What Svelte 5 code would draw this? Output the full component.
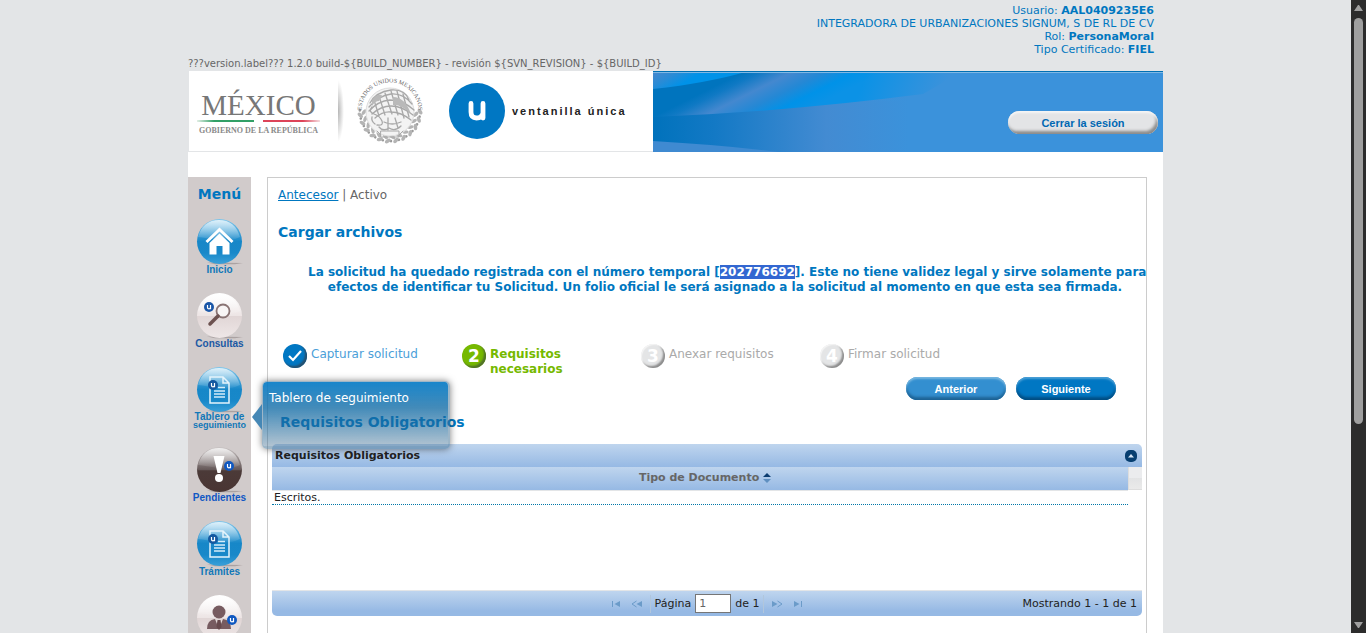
<script>
  const menu = [
    { icon: 'home', label: 'Inicio', tone: 'sky' },
    { icon: 'search', label: 'Consultas', tone: 'navy' },
    { icon: 'doc', label: 'Tablero de', second: 'seguimiento', tone: 'sky', tip: 'Tablero de seguimiento' },
    { icon: 'alert', label: 'Pendientes', tone: 'royal' },
    { icon: 'doc', label: 'Trámites', tone: 'sky' },
    { icon: 'person', label: '', tone: 'navy' }
  ];
  const steps = [
    { n: '', label: 'Capturar solicitud', state: 'done' },
    { n: '2', label: 'Requisitos necesarios', state: 'current' },
    { n: '3', label: 'Anexar requisitos', state: 'todo' },
    { n: '4', label: 'Firmar solicitud', state: 'todo' }
  ];
  const discs = { home: 'url(#blueDisc)', doc: 'url(#blueDisc)', search: 'url(#paleDisc)', person: 'url(#paleDisc)', alert: 'url(#darkDisc)' };
  const leaves = Array.from({ length: 12 }, (_, i) => 5 + i * 15.5);
  let page = $state('1');
</script>

{#snippet badge(x, y, r, color)}
  <circle cx={x} cy={y} {r} fill={color} />
  <path d="M{x - 1.5} {y - 2}v2.500q0 1.300 1.500 1.300t1.500-1.300v-2.500M{x + 1.5} {y}v2.200" fill="none" stroke="#fff" stroke-width="1.200" />
{/snippet}

<div class="shell">
  <div class="view">
    <div class="site">
      <div class="user">
        <div>Usuario: <b>AAL0409235E6</b></div>
        <div>INTEGRADORA DE URBANIZACIONES SIGNUM, S DE RL DE CV</div>
        <div>Rol: <b>PersonaMoral</b></div>
        <div>Tipo Certificado: <b>FIEL</b></div>
      </div>
      <div class="version">???version.label??? 1.2.0 build-{'${BUILD_NUMBER}'} - revisión {'${SVN_REVISION}'} - {'${BUILD_ID}'}</div>

      <header>
        <div class="logos">
          <div class="mexico">
            <span class="name">MÉXICO</span>
            <span class="flag"><i></i><i></i></span>
            <span class="gov">GOBIERNO DE LA REPÚBLICA</span>
          </div>
          <div class="divider"></div>
          <svg class="seal" width="70" height="70" viewBox="0 0 70 70" aria-hidden="true">
            <defs><path id="sealArc" d="M13 53A28.500 28.500 0 1 1 57 53" /></defs>
            <g fill="#b4b4b4">
              {#each leaves as a}
                <g transform="rotate({a} 35 35)">
                  <ellipse cx="65" cy="33" rx="3.200" ry="1.800" transform="rotate(50 65 33)" />
                  <ellipse cx="61" cy="36" rx="3.200" ry="1.700" transform="rotate(-50 61 36)" />
                  <circle cx="65" cy="38" r="1.300" fill="#999" />
                </g>
              {/each}
            </g>
            <circle cx="35" cy="36" r="24" fill="#f3f3f3" stroke="#ddd" />
            <text class="sealtext"><textPath href="#sealArc" startOffset="50%" text-anchor="middle">ESTADOS UNIDOS MEXICANOS</textPath></text>
            <g fill="none" stroke="#a8a8a8" stroke-width="1.300" stroke-linecap="round">
              <path d="M15 27q6-11 21-13 14-1 18 10M14 31q9-11 22-13 12-1 21 10M14 35q9-10 21-11 13 0 24 10M17 38q9-8 19-8 11 0 22 9M20 42q8-7 16-6 10 0 20 8" />
              <path d="M19 24l5 16M24 20l6 19M30 17l7 21M36 15l7 24M42 15l7 27M48 18l6 23" />
              <path d="M17 31q-4 5 2 7t8 7q2 5-5 4M29 46q8 4 17 0M24 51q4 5 10 1 6 4 12-2M33 42v12M40 42l3 10M20 48q-4-3-3-7" />
              <path d="M26 55h18v6H26zM22 55l4 4M48 55l-4 4" stroke-width="1" />
            </g>
            <path d="M17 24q4-6 10-5l-3 6q-4 0-7 5zM38 21q12 0 18 17-10-10-18-9z" fill="#b9b9b9" />
          </svg>
          <svg class="unica" width="56" height="56" viewBox="0 0 56 56" aria-hidden="true">
            <circle cx="28" cy="28" r="28" fill="#0077c3" />
            <path d="M22 20.500v8.500q0 6 5.500 6t6.500-5v-9.500V35" fill="none" stroke="#fff" stroke-width="4.800" stroke-linecap="round" stroke-linejoin="round" />
          </svg>
          <span class="ventanilla">ventanilla única</span>
        </div>
        <div class="banner">
          <svg viewBox="0 0 510 81" preserveAspectRatio="none" aria-hidden="true">
            <defs>
              <linearGradient id="b1" x1="0" y1="0" x2="510" y2="0" gradientUnits="userSpaceOnUse"><stop offset="0" stop-color="#0072bc" /><stop offset=".12" stop-color="#1379c5" /><stop offset=".34" stop-color="#438bd2" /><stop offset=".5" stop-color="#3b92db" /><stop offset="1" stop-color="#3b92db" /></linearGradient>
              <linearGradient id="b2" x1="0" y1="46" x2="28" y2="102" gradientUnits="userSpaceOnUse"><stop offset="0" stop-color="#0074be" /><stop offset=".12" stop-color="#0f79c4" /><stop offset=".35" stop-color="#4488cf" /><stop offset=".58" stop-color="#2488d5" /><stop offset=".8" stop-color="#0092e8" /><stop offset="1" stop-color="#0b92e6" /></linearGradient>
              <linearGradient id="b3" x1="0" y1="0" x2="16" y2="28" gradientUnits="userSpaceOnUse"><stop offset="0" stop-color="#4a88cd" /><stop offset=".4" stop-color="#2b8bd5" /><stop offset=".8" stop-color="#0092e8" /></linearGradient>
              <linearGradient id="fade" x1="215" y1="0" x2="285" y2="30" gradientUnits="userSpaceOnUse"><stop offset="0" stop-color="#3b92db" stop-opacity="0" /><stop offset="1" stop-color="#3b92db" /></linearGradient>
            </defs>
            <path fill="url(#b1)" d="M0 0h510v81H0z" />
            <path fill="url(#b2)" d="M0 0h310L270 23Q130 41 0 46z" />
            <path fill="url(#fade)" d="M170 0h145v30H170z" />
            <path fill="url(#b3)" d="M0 0h96Q55 12 0 18z" />
            <path fill="#3f8ad1" d="M0 70q70 4 126 11H0z" />
            <path fill="#80b8e4" d="M0 1h510v1H0z" />
            <path fill="#0070b4" d="M0 0h510v1H0z" />
          </svg>
          <button class="pill logout" type="button">Cerrar la sesión</button>
        </div>
      </header>

      <div class="body">
        <nav>
          <h2>Menú</h2>
          {#each menu as m}
            <a href="#menu" class="item {m.tone}">
              <svg width="54" height="46" viewBox="0 0 54 46" aria-hidden="true">
                <defs>
                  <linearGradient id="blueDisc" x2="0" y2="1"><stop offset="0" stop-color="#7fc7ec" /><stop offset=".5" stop-color="#1787c8" /><stop offset=".75" stop-color="#1888c9" /><stop offset="1" stop-color="#3aa0d8" /></linearGradient>
                  <linearGradient id="paleDisc" x2="0" y2="1"><stop offset="0" stop-color="#fff" /><stop offset=".5" stop-color="#ede5e5" /><stop offset=".52" stop-color="#e1d6d6" /><stop offset="1" stop-color="#eee7e7" /></linearGradient>
                  <linearGradient id="darkDisc" x2="0" y2="1"><stop offset="0" stop-color="#c9c4c4" /><stop offset=".5" stop-color="#665959" /><stop offset=".53" stop-color="#4b3a38" /><stop offset="1" stop-color="#4a3533" /></linearGradient>
                  <linearGradient id="gloss" x2="0" y2="1"><stop offset="0" stop-color="#fff" stop-opacity=".75" /><stop offset="1" stop-color="#fff" stop-opacity=".03" /></linearGradient>
                </defs>
                <path d="M14 43.500l36 .5-8 1.200H22z" fill="#aaa2a2" />
                <circle cx="26.500" cy="22.500" r="22.500" fill={discs[m.icon]} />
                <path d="M5 18Q10 1 26 1t21 17q-10 5-22 3T5 18z" fill="url(#gloss)" />
                {#if m.icon === 'home'}
                  <path d="M26.500 8.500L12.500 22l2 2 12-11.500L38.500 24l2-2z" fill="#fff" /><path d="M26.500 14.500L16.500 24v11.500h7V27h6v8.500h7V24z" fill="#fff" />
                {:else if m.icon === 'search'}
                  <circle cx="30" cy="18" r="6.500" fill="#f8f5f5" stroke="#8a7474" stroke-width="1.800" /><path d="M25 23L17 31" stroke="#6d5250" stroke-width="3.500" stroke-linecap="round" />{@render badge(16, 14, 5, '#1b57a8')}
                {:else if m.icon === 'doc'}
                  <path d="M17 10h13l6 6v20H17zM30 10v6h6" fill="none" stroke="#e4f4fc" stroke-width="1.500" /><path d="M25 20.500h7M21 24h11M21 27h11M21 30h11" stroke="#d5edf9" stroke-width="1.500" />{@render badge(20, 18, 5, '#1559a0')}
                {:else if m.icon === 'alert'}
                  <path d="M20.500 9h11l-4 17h-3z" fill="#fff" /><circle cx="26" cy="31" r="4" fill="#fff" />{@render badge(36, 19, 5, '#1058c0')}
                {:else}
                  <circle cx="26" cy="17" r="6.500" fill="#775b60" /><path d="M14 34q0-9 8-10l4 10 4-10q8 1 8 10z" fill="#775b60" /><path d="M24.500 25h3l1 7-2.500 3-2.500-3z" fill="#67494d" />{@render badge(39, 25, 5, '#1058c0')}
                {/if}
              </svg>
              {#if m.label}<span class="label" class:wide={m.second}>{m.label}</span>{/if}
              {#if m.second}<span class="label second">{m.second}</span>{/if}
              {#if m.tip}<span class="tip">{m.tip}</span>{/if}
            </a>
          {/each}
        </nav>

        <main>
          <div class="crumbs"><a href="#antecesor">Antecesor</a> | Activo</div>
          <h1>Cargar archivos</h1>
          <p class="notice">La solicitud ha quedado registrada con el número temporal [<mark>202776692</mark>]. Este no tiene validez legal y sirve solamente para<br />efectos de identificar tu Solicitud. Un folio oficial le será asignado a la solicitud al momento en que esta sea firmada.</p>

          <ol class="steps">
            {#each steps as s}
              <li class={s.state}>
                <span class="ball">{#if s.n}{s.n}{:else}<svg width="16" height="14" viewBox="0 0 16 14" aria-hidden="true"><path d="M2 7l4 4 8-9" fill="none" stroke="#fff" stroke-width="2.200" /></svg>{/if}</span>
                <span>{s.label}</span>
              </li>
            {/each}
          </ol>
          <div class="actions">
            <button class="pill prev" type="button">Anterior</button>
            <button class="pill next" type="button">Siguiente</button>
          </div>

          <h2 class="section">Requisitos Obligatorios</h2>
          <section class="grid">
            <div class="gridtitle">
              <span>Requisitos Obligatorios</span>
              <button type="button" aria-label="Contraer"><svg width="12" height="12" viewBox="0 0 12 12"><path d="M3 7.500L6 4l3 3.500z" fill="#d5e5f5" /></svg></button>
            </div>
            <div class="gridbody">
              <div class="tablewrap">
                <table>
                  <thead><tr><th>Tipo de Documento <svg width="8" height="10" viewBox="0 0 8 10" aria-hidden="true"><path d="M0 4l4-4 4 4z" fill="#0a3c70" /><path d="M0 6l4 4 4-4z" fill="#5f8fc0" /></svg></th></tr></thead>
                  <tbody><tr><td>Escritos.</td></tr></tbody>
                </table>
                <div class="gutter"></div>
              </div>
            </div>
            <div class="pager">
              <span></span>
              <div class="pages">
                <button type="button" aria-label="Primera"><svg width="10" height="8" viewBox="0 0 10 8"><path d="M1 1h1v6H1zM9 1v6L3.500 4z" /></svg></button>
                <button type="button" aria-label="Previa"><svg width="12" height="8" viewBox="0 0 12 8"><path d="M11 1v6L5.500 4z" /><path d="M5.500 1L1 4l4.500 3" fill="none" stroke="#6b9bc9" /></svg></button>
                <i></i>
                <label for="page">Página</label>
                <input id="page" type="text" bind:value={page} />
                <span class="total">de 1</span>
                <i></i>
                <button type="button" aria-label="Siguiente"><svg width="12" height="8" viewBox="0 0 12 8"><path d="M1 1v6l5.500-3z" /><path d="M6.500 1L11 4 6.500 7" fill="none" stroke="#6b9bc9" /></svg></button>
                <button type="button" aria-label="Última"><svg width="10" height="8" viewBox="0 0 10 8"><path d="M8 1h1v6H8zM1 1v6l5.500-3z" /></svg></button>
              </div>
              <span class="count">Mostrando 1 - 1 de 1</span>
            </div>
          </section>
        </main>
      </div>
    </div>
  </div>
  <div class="scroll" aria-hidden="true">
    <svg width="9" height="8" viewBox="0 0 9 8"><path d="M4 1h1l4 6H0z" fill="#9f9f9f" /></svg>
    <div class="track"><div class="thumb"></div></div>
    <svg width="9" height="8" viewBox="0 0 9 8"><path d="M4 7h1l4-6H0z" fill="#9f9f9f" /></svg>
  </div>
</div>

<style>
  :global(body) { margin: 0; background: #e3e5e7; }
  * { box-sizing: border-box; }
  .shell { display: flex; height: 100vh; overflow: hidden; font: 12px/15px Verdana, "DejaVu Sans", sans-serif; color: #666; }
  .view { flex: 1; min-width: 0; overflow: hidden; }
  .site { max-width: 975px; margin: 0 auto; display: flex; flex-direction: column; }
  a { color: #0077c0; }
  h1, h2 { margin: 0; color: #0077c0; font-weight: bold; }
  button { font-family: inherit; cursor: pointer; }

  .user { padding: 4px 9px 0 0; text-align: right; font-size: 11px; line-height: 13px; color: #0077c0; }
  .version { font-size: 10px; line-height: 15px; white-space: nowrap; }

  header { display: flex; }
  .logos { flex: 464 1 0; display: flex; align-items: center; height: 81px; margin-left: 1px; background: #fff; border-bottom: 1px solid #e3e5e7; }
  .mexico { display: flex; flex-direction: column; align-items: center; width: 125px; margin-left: 7px; padding-top: 4px; font-family: "Liberation Serif", serif; color: #777; white-space: nowrap; }
  .name { font-size: 29px; line-height: 28px; }
  .flag { display: flex; gap: 9px; width: 123px; margin: 1px 0 4px; }
  .flag i { flex: 1; height: 2px; background: linear-gradient(90deg, #e3efe6, #32a067 30%, #32a067); }
  .flag i + i { background: linear-gradient(90deg, #dd4459, #dd4459 70%, #f5dde0); }
  .gov { font-size: 8px; line-height: 10px; font-weight: bold; color: #8a8a8a; }
  .divider { width: 6px; height: 62px; margin-left: 17px; background: radial-gradient(ellipse at left, #b5b5b5, #fff 70%); }
  .seal { margin-left: 11px; }
  .sealtext { font: 6px "Liberation Serif", serif; fill: #666; }
  .unica { margin-left: 24px; }
  .ventanilla { margin-left: 7px; font: bold 11px/14px "Liberation Sans", sans-serif; letter-spacing: 2px; color: #222; white-space: nowrap; }
  .banner { flex: 510 1 0; display: grid; height: 81px; }
  .banner > * { grid-area: 1 / 1; }
  .banner svg { width: 100%; height: 81px; }

  .pill { height: 23px; padding: 0; border: 0; border-radius: 12px; font: bold 11px/24px "Liberation Sans", sans-serif; color: #fff; text-align: center; }
  .logout { position: relative; justify-self: end; align-self: start; width: 150px; margin: 40px 5px 0 0; color: #0068b3; background: #e3e4e6; box-shadow: inset 0 2px 2px #f5f5f5, inset -2px -3px 3px #8b8b8b; }
  .prev { width: 100px; background: #338fd0; box-shadow: inset 0 2px 2px #78b7e0, inset 0 -3px 3px #1d6294; }
  .next { width: 100px; background: #0077c3; box-shadow: inset 0 2px 2px #4ba0d6, inset 0 -3px 3px #004d82; }

  .body { display: flex; align-items: stretch; padding: 25px 16px 0 0; background: #fff; }
  nav { display: flex; flex-direction: column; align-items: stretch; gap: 18px; width: 63px; flex: none; padding: 8px 0 18px; background: #d1cbcb; }
  nav h2 { margin-bottom: -2px; font-size: 14px; line-height: 18px; text-align: center; }
  .item { position: relative; display: flex; flex-direction: column; align-items: center; text-decoration: none; font: bold 10px/10px "Liberation Sans", sans-serif; }
  .item svg { display: block; }
  .sky { color: #1278b8; }
  .navy { color: #1b59a4; }
  .royal { color: #1057c4; }
  .label { white-space: nowrap; }
  .wide { font-size: 10px; line-height: 8px; }
  .second { font-size: 9px; line-height: 8px; }
  .tip { position: absolute; z-index: 2; left: 74px; top: 14px; width: 188px; height: 68px; padding: 9px 6px; border-radius: 5px; border: 1px solid rgba(60, 110, 145, .5); border-width: 1px 2px 3px 1px; background: linear-gradient(rgba(0, 120, 197, .9), rgba(14, 106, 165, .78) 40%, rgba(60, 105, 140, .4)); background-clip: padding-box; box-shadow: 0 0 7px rgba(0, 0, 0, .5); font: 12px/15px Verdana, "DejaVu Sans", sans-serif; color: #fff; white-space: nowrap; }
  .tip::before { content: ""; position: absolute; left: -11px; top: 22px; border: solid transparent; border-width: 13px 10px 13px 0; border-right-color: #4587b5; }

  main { flex: 1; min-width: 0; margin-left: 16px; padding: 10px 4px 40px; border: 1px solid #ccc; }
  .crumbs { padding-left: 6px; }
  h1 { margin-top: 20px; padding-left: 6px; font-size: 14px; line-height: 18px; }
  .notice { margin: 24px 0 0 36px; text-align: center; font-weight: bold; color: #0077c0; white-space: nowrap; }
  mark { background: #3367d1; color: #fff; }
  .steps { display: flex; margin: 52px 0 0; padding: 0 0 0 11px; list-style: none; min-height: 30px; }
  .steps li { display: flex; gap: 4px; width: 179px; padding-right: 40px; color: #aaa; }
  .ball { display: flex; flex: none; align-items: center; justify-content: center; width: 24px; height: 24px; margin-top: -3px; border-radius: 50%; background: #e4e5e6; color: #fff; font-size: 17px; font-weight: bold; box-shadow: inset 1px 1px 1px #f5f5f5, inset -2px -2px 2px #8d8d8d; }
  .steps .done { color: #4ba0d9; }
  .done .ball { background: #0077c3; box-shadow: inset -2px -2px 2px #26506e; }
  .steps .current { color: #76b900; font-weight: bold; }
  .current .ball { background: #76b900; box-shadow: inset -2px -2px 2px #50702a; }
  .actions { display: flex; justify-content: flex-end; gap: 10px; padding-right: 26px; }
  .section { margin-top: 13px; padding-left: 8px; font-size: 14px; line-height: 18px; }

  .grid { margin-top: 13px; font-size: 11px; color: #222; }
  .gridtitle { display: flex; align-items: center; justify-content: space-between; height: 23px; padding: 0 5px 0 3px; border-radius: 5px 5px 0 0; background: linear-gradient(#bfd5ee, #96b9e4); font-weight: bold; }
  .gridtitle button { width: 12px; height: 12px; padding: 0; border: 0; border-radius: 5px; background: #063e70; }
  .gridtitle svg { display: block; }
  .gridbody { height: 123px; }
  .tablewrap { display: flex; }
  table { flex: 1; border-collapse: collapse; }
  th { height: 23px; padding: 0 0 2px 10px; border-bottom: 1px solid #e3e5e7; background: linear-gradient(#bfd5ee, #96b9e4); color: #666; }
  td { height: 14px; padding: 0 2px; line-height: 13px; border-bottom: 1px dotted #0077a8; }
  th svg { vertical-align: -2px; }
  .gutter { width: 14px; height: 23px; border-left: 1px solid #ddd; border-bottom: 1px solid #ddd; background: linear-gradient(#ebecee 50%, #e2e3e4 50%, #eaeaea); }
  .pager { display: grid; grid-template-columns: 1fr auto 1fr; align-items: center; height: 26px; padding: 0 5px; border-top: 1px solid #e3e5e7; border-radius: 0 0 5px 5px; background: linear-gradient(#bfd5ee, #96b9e4 80%); }
  .pages { display: flex; align-items: center; gap: 4px; }
  .pages button { display: flex; padding: 0 3px; border: 0; background: none; }
  .pages svg { fill: #6b9bc9; }
  .pages i { width: 1px; height: 18px; background: #b1c6dc; }
  .pages input { width: 36px; height: 19px; padding: 0 3px; border: 1px solid #767676; background: #fff; color: #666; font: 11px "DejaVu Sans", sans-serif; }
  .count { text-align: right; }

  .scroll { display: flex; flex-direction: column; align-items: center; width: 15px; flex: none; padding: 4px 0; background: #2c2c2c; }
  .track { flex: 1; width: 9px; padding: 6px 0; }
  .thumb { height: 68%; border-radius: 5px; background: #9f9f9f; }
</style>
